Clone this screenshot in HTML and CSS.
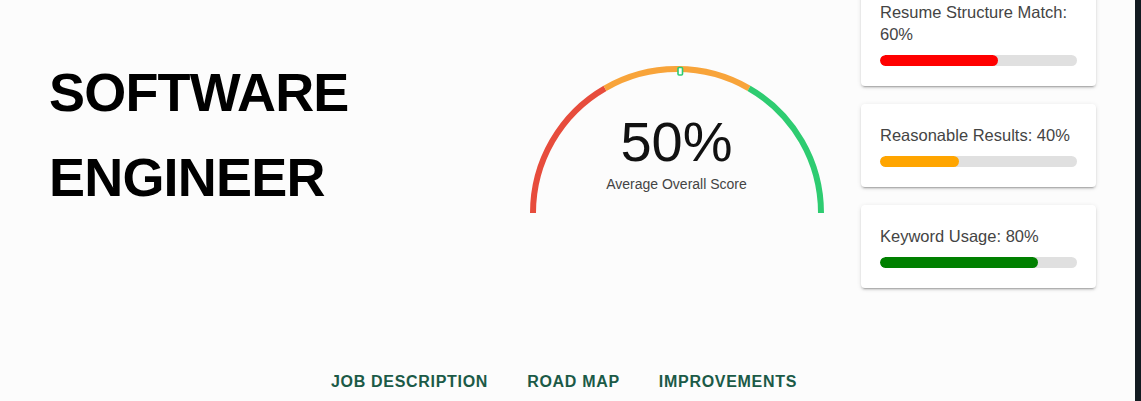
FILE: index.html
```html
<!DOCTYPE html>
<html lang="en">
<head>
<meta charset="utf-8">
<title>Software Engineer – Resume Score</title>
<link rel="stylesheet" href="styles.css">
</head>
<body>
<div class="app">
  <main class="page">
    <section class="hero">
      <div class="title-col">
        <h1 class="job-title">SOFTWARE ENGINEER</h1>
      </div>
      <div class="gauge">
        <svg class="gauge-svg" width="300" height="150" viewBox="0 0 300 150" aria-hidden="true">
          <path d="M 6 147 A 144 144 0 0 1 78 22.29" fill="none" stroke="#e74c3c" stroke-width="6"/>
          <path d="M 78 22.29 A 144 144 0 0 1 222 22.29" fill="none" stroke="#f8a43a" stroke-width="6"/>
          <path d="M 222 22.29 A 144 144 0 0 1 294 147" fill="none" stroke="#2ecc71" stroke-width="6"/>
          <rect x="151" y="1.5" width="4.5" height="7.5" rx="1" fill="#ffffff" stroke="#2ecc71" stroke-width="1.6"/>
        </svg>
        <div class="gauge-text">
          <div class="gauge-value">50%</div>
          <div class="gauge-label">Average Overall Score</div>
        </div>
      </div>
      <div class="metrics">
        <div class="card">
          <div class="card-label">Resume Structure Match: 60%</div>
          <div class="bar"><div class="fill fill-red" style="width:60%"></div></div>
        </div>
        <div class="card">
          <div class="card-label">Reasonable Results: 40%</div>
          <div class="bar"><div class="fill fill-orange" style="width:40%"></div></div>
        </div>
        <div class="card">
          <div class="card-label">Keyword Usage: 80%</div>
          <div class="bar"><div class="fill fill-green" style="width:80%"></div></div>
        </div>
      </div>
    </section>
    <nav class="tabs">
      <button class="tab">JOB DESCRIPTION</button>
      <button class="tab">ROAD MAP</button>
      <button class="tab">IMPROVEMENTS</button>
    </nav>
  </main>
  <div class="edge"></div>
</div>
</body>
</html>
```

FILE: styles.css
```css
* {
  box-sizing: border-box;
}

html, body {
  margin: 0;
  padding: 0;
  height: 100%;
  overflow: hidden;
}

body {
  background: #fcfcfc;
  font-family: "Liberation Sans", Arial, Helvetica, sans-serif;
  color: #000;
}

.app {
  display: flex;
  height: 100%;
}

.page {
  flex: 1;
  display: flex;
  flex-direction: column;
}

.edge {
  width: 6px;
  flex: 0 0 6px;
  background: #131b21;
}

.hero {
  display: flex;
  align-items: center;
  margin-top: -19px;
  padding: 0 39px 0 49px;
}

.title-col {
  flex: 0 0 477.5px;
}

.job-title {
  margin: 0;
  width: 330px;
  font-size: 54px;
  line-height: 85px;
  font-weight: 700;
  letter-spacing: -0.8px;
  color: #000;
}

.gauge {
  flex: 0 0 300px;
  display: grid;
  height: 150px;
  margin-top: 13px;
  margin-right: 34.5px;
}

.gauge-svg {
  grid-area: 1 / 1;
  display: block;
}

.gauge-text {
  grid-area: 1 / 1;
  display: flex;
  flex-direction: column;
  align-items: center;
  padding-top: 48px;
}

.gauge-value {
  font-size: 56px;
  line-height: 56px;
  color: #111;
}

.gauge-label {
  margin-top: 6px;
  font-size: 14px;
  line-height: 16.8px;
  color: #444;
}

.metrics {
  flex: 0 0 235px;
  display: flex;
  flex-direction: column;
  gap: 18px;
}

.card {
  background: #ffffff;
  border-radius: 4px;
  padding: 20px 19px;
  box-shadow: 0 3px 1px -2px rgba(0, 0, 0, 0.18), 0 2px 2px 0 rgba(0, 0, 0, 0.12), 0 1px 5px 0 rgba(0, 0, 0, 0.1);
}

.card-label {
  font-size: 16.5px;
  line-height: 22px;
  color: #444;
}

.bar {
  margin-top: 10px;
  height: 11px;
  border-radius: 6px;
  background: #e0e0e0;
  overflow: hidden;
}

.fill {
  height: 100%;
  border-radius: 6px;
}

.fill-red {
  background: #ff0000;
}

.fill-orange {
  background: #ffa500;
}

.fill-green {
  background: #008000;
}

.tabs {
  display: flex;
  justify-content: center;
  margin-top: 70px;
  padding-right: 7px;
}

.tab {
  border: 0;
  background: transparent;
  padding: 12px 19.5px;
  font-family: "Liberation Sans", Arial, Helvetica, sans-serif;
  font-size: 16px;
  line-height: 24px;
  font-weight: 700;
  letter-spacing: 0.7px;
  color: #1b5a47;
  cursor: pointer;
}
```
